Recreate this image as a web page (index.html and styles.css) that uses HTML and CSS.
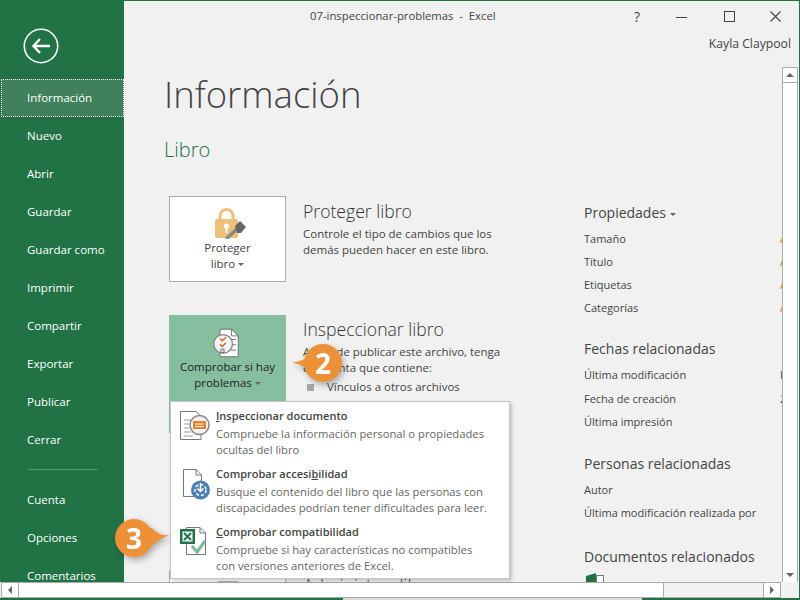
FILE: index.html
```html
<!DOCTYPE html>
<html lang="es">
<head>
  <meta charset="UTF-8">
  <title>07-inspeccionar-problemas - Excel</title>
  <link rel="stylesheet" href="styles.css">
</head>
<body>
  <div class="window">
    <div class="app">
      <nav class="sidebar">
        <div class="back">
          <svg width="36" height="36" viewBox="0 0 36 36" fill="none" stroke="#fff">
            <circle cx="18" cy="18" r="16.7" stroke-width="1.6"/>
            <path d="M10 18H27M17 11L10.500 18L17 25" stroke-width="2.400"/>
          </svg>
        </div>
        <a class="nav-item active">Información</a>
        <a class="nav-item">Nuevo</a>
        <a class="nav-item">Abrir</a>
        <a class="nav-item">Guardar</a>
        <a class="nav-item">Guardar como</a>
        <a class="nav-item">Imprimir</a>
        <a class="nav-item">Compartir</a>
        <a class="nav-item">Exportar</a>
        <a class="nav-item">Publicar</a>
        <a class="nav-item">Cerrar</a>
        <div class="nav-sep"></div>
        <a class="nav-item">Cuenta</a>
        <a class="nav-item">Opciones</a>
        <a class="nav-item">Comentarios</a>
      </nav>

      <div class="main">
        <div class="titlebar">
          <span class="doc-name">07-inspeccionar-problemas &nbsp;-&nbsp; Excel</span>
          <div class="win-buttons">
            <span class="win-help">?</span>
            <svg width="16" height="16" viewBox="0 0 16 16" stroke="#444" fill="none"><path d="M0 8.5H11"/></svg>
            <svg width="16" height="16" viewBox="0 0 16 16" stroke="#444" fill="none"><rect x="2.5" y="2.5" width="10" height="10"/></svg>
            <svg width="16" height="16" viewBox="0 0 16 16" stroke="#444" fill="none" stroke-width="1.1"><path d="M2.5 2.5L12.5 12.5M12.5 2.5L2.5 12.5"/></svg>
          </div>
        </div>
        <div class="user">Kayla Claypool</div>

        <div class="scroll-wrap">
          <div class="doc">
            <h1>Información</h1>
            <h2>Libro</h2>
            <div class="columns">
              <div class="left-col">
                <section class="block">
                  <div class="card">
                    <svg class="card-icon" width="36" height="32" viewBox="0 0 36 32">
                      <path d="M10 13V9a6.500 6.500 0 0 1 13 0v4" fill="none" stroke="#edc07c" stroke-width="3"/>
                      <rect x="5" y="12" width="23" height="19" rx="2" fill="#edc07c"/>
                      <circle cx="16.500" cy="19" r="2.500" fill="#fff"/>
                      <rect x="15.500" y="20" width="2" height="6" fill="#fff"/>
                      <path d="M16 32l12-11" stroke="#8a8a8a" stroke-width="3.500"/>
                      <path d="M25 19l5-5 6 6-5 6h-4z" fill="#666"/>
                    </svg>
                    <span>Proteger<br>libro <i class="caret"></i></span>
                  </div>
                  <div class="block-text">
                    <h3>Proteger libro</h3>
                    <p>Controle el tipo de cambios que los<br>demás pueden hacer en este libro.</p>
                  </div>
                </section>

                <section class="block block-tall">
                  <div class="card card-active">
                    <svg class="card-icon" width="32" height="30" viewBox="0 2 36 32" fill="none">
                      <path d="M9 2.500H22L29.500 10V33.500H9z" fill="#fff" stroke="#666"/>
                      <path d="M22 2.500V10H29.500" stroke="#666"/>
                      <path d="M21 14H27M21 20H27M21 26H27" stroke="#666"/>
                      <circle cx="12.500" cy="19" r="10.500" fill="#f4f4f4" stroke="#888" stroke-width="1.500"/>
                      <path d="M9 13l2.500 2.500 4-4M9 19.500l2.500 2.500 4-4" stroke="#d2622a" stroke-width="1.500"/>
                      <rect x="10" y="25" width="3.500" height="3.500" stroke="#666"/>
                    </svg>
                    <span>Comprobar si hay<br>problemas <i class="caret"></i></span>
                  </div>
                  <div class="block-text">
                    <h3>Inspeccionar libro</h3>
                    <p>Antes de publicar este archivo, tenga<br>en cuenta que contiene:</p>
                    <ul>
                      <li>Vínculos a otros archivos</li>
                    </ul>
                  </div>
                </section>

                <section class="block">
                  <div class="card">
                    <svg class="card-icon" width="36" height="32" viewBox="0 0 36 32" fill="none"><rect x="8" y="1" width="20" height="30" fill="#fff" stroke="#666"/></svg>
                  </div>
                  <div class="block-text">
                    <h3>Administrar libro</h3>
                  </div>
                </section>
              </div>

              <aside class="props">
                <div class="props-group props-first">
                  <h4>Propiedades <i class="caret"></i></h4>
                  <div class="prop"><span>Tamaño</span><b class="add">Aún no guardado</b></div>
                  <div class="prop"><span>Título</span><b class="add">Agregar un título</b></div>
                  <div class="prop"><span>Etiquetas</span><b class="add">Agregar una etiqueta</b></div>
                  <div class="prop"><span>Categorías</span><b class="add">Agregar una categoría</b></div>
                </div>

                <div class="props-group">
                  <h4>Fechas relacionadas</h4>
                  <div class="prop"><span>Última modificación</span><b>Hoy, 11:11</b></div>
                  <div class="prop"><span>Fecha de creación</span><b>22/07/2015</b></div>
                  <div class="prop"><span>Última impresión</span></div>
                </div>

                <div class="props-group">
                  <h4>Personas relacionadas</h4>
                  <div class="prop"><span>Autor</span></div>
                  <div class="prop"><span>Última modificación realizada por</span></div>
                </div>

                <div class="props-group props-last">
                  <h4>Documentos relacionados</h4>
                  <svg class="related-icon" width="50" height="12" viewBox="0 0 50 12"><path d="M2 4l10-3v11H2z" fill="#217346"/><rect x="12.500" y="3.500" width="7" height="9" fill="#fff" stroke="#777"/></svg>
                </div>
              </aside>
            </div>
          </div>

          <div class="vscroll">
            <div class="sb-btn"><i class="arrow-up"></i></div>
            <div class="sb-track"></div>
            <div class="sb-btn"><i class="arrow-down"></i></div>
          </div>
        </div>
      </div>
    </div>

    <div class="hscroll">
      <div class="sb-btn"><i class="arrow-left"></i></div>
      <div class="hs-track"></div>
      <div class="hs-gray"></div>
      <div class="sb-btn"><i class="arrow-right"></i></div>
    </div>
    <div class="bottom-edge"></div>

    <div class="menu">
      <div class="menu-item">
        <svg width="32" height="32" viewBox="0 0 32 32" fill="none">
          <path d="M1.500 1.500H17L22 6V29.500H1.500z" fill="#fff" stroke="#777"/>
          <path d="M5 10H12M5 14H10M5 18H10M5 22H12M5 26H14" stroke="#999"/>
          <circle cx="20.500" cy="15" r="9.500" fill="#f2f2f2" stroke="#888" stroke-width="1.500"/>
          <rect x="14" y="11" width="13" height="8" fill="#e5822f"/>
          <path d="M16 14H24.500M16 16.500H24.500" stroke="#fff"/>
        </svg>
        <div>
          <strong><u>I</u>nspeccionar documento</strong>
          <p>Compruebe la información personal o propiedades<br>ocultas del libro</p>
        </div>
      </div>
      <div class="menu-item">
        <svg width="32" height="32" viewBox="0 0 32 32" fill="none">
          <path d="M4.500 1.500H17L22.500 7V28.500H4.500z" fill="#fff" stroke="#777"/>
          <path d="M17 1.500V7H22.500" stroke="#777"/>
          <circle cx="21.500" cy="22" r="9.500" fill="#4b7fb5"/>
          <circle cx="21.500" cy="22" r="5.500" fill="none" stroke="#fff" stroke-dasharray="3 2" stroke-width="1.500"/>
          <path d="M21.500 15V23M18.500 20.500L21.500 23.500L24.500 20.500" stroke="#fff" stroke-width="1.500"/>
        </svg>
        <div>
          <strong>Comprobar acces<span>i</span><u>b</u>ilidad</strong>
          <p>Busque el contenido del libro que las personas con<br>discapacidades podrían tener dificultades para leer.</p>
        </div>
      </div>
      <div class="menu-item">
        <svg width="32" height="32" viewBox="0 0 32 32" fill="none">
          <path d="M7.500 1.500H21L26.500 7V28.500H7.500z" fill="#fff" stroke="#777"/>
          <path d="M21 1.500V7H26.500" stroke="#777"/>
          <rect x="1" y="3" width="15" height="15" fill="#217346"/>
          <rect x="3.500" y="5.500" width="10" height="10" fill="#fff"/>
          <path d="M5 7L12 14M12 7L5 14" stroke="#217346" stroke-width="2"/>
          <path d="M13 20L18 26L26 15" stroke="#7fb89a" stroke-width="3"/>
        </svg>
        <div>
          <strong><u>C</u>omprobar compatibilidad</strong>
          <p>Compruebe si hay características no compatibles<br>con versiones anteriores de Excel.</p>
        </div>
      </div>
    </div>

    <div class="callout callout-two">
      <svg width="58" height="44" viewBox="0 0 58 44"><path d="M1 21.500Q12 21 20 13L36 14L24 33Q14 24 1 21.500z" fill="#ed9139"/><circle cx="32" cy="22" r="19" fill="#ed9139"/></svg>
      <span>2</span>
    </div>
    <div class="callout callout-three">
      <svg width="58" height="44" viewBox="0 0 58 44"><path d="M56 19Q46 21 38 12L22 14L34 33Q44 23 56 19z" fill="#ed9139"/><circle cx="20" cy="22" r="19" fill="#ed9139"/></svg>
      <span>3</span>
    </div>
  </div>
</body>
</html>
```

FILE: styles.css
```css
/* Excel backstage */
body {
  margin: 0;
  font-family: "Open Sans", "Noto Sans", sans-serif;
  color: #444;
  overflow: hidden;
}

.window {
  position: relative;
  width: 800px;
  height: 600px;
  display: flex;
  flex-direction: column;
  box-sizing: border-box;
  border-top: 1px solid #217346;
  border-right: 1px solid #217346;
  background: #f1f1f1;
  overflow: hidden;
}

.app {
  flex: 1;
  display: flex;
  min-height: 0;
}

/* sidebar */
.sidebar {
  width: 124px;
  flex: none;
  background: #217346;
  overflow: hidden;
}

.back {
  height: 78px;
  box-sizing: border-box;
  padding: 27px 0 0 23px;
}

.nav-item {
  display: block;
  height: 38px;
  line-height: 38px;
  padding-left: 27px;
  font-size: 11.5px;
  color: #fff;
  box-sizing: border-box;
}

.nav-item.active {
  background: #40805d;
  outline: 1px dotted #fff;
  outline-offset: -1px;
  margin-left: 1px;
  padding-left: 26px;
}

.nav-sep {
  height: 1px;
  margin: 10px 26px 11px 27px;
  background: #4f9a73;
}

/* title bar */
.main {
  flex: 1;
  min-width: 0;
  display: flex;
  flex-direction: column;
}

.titlebar {
  height: 31px;
  flex: none;
  display: flex;
  align-items: center;
}

.doc-name {
  margin: -2px 0 0 186px;
  font-size: 11.3px;
}

.win-buttons {
  margin-left: auto;
  display: flex;
  align-items: center;
  gap: 30px;
  padding-right: 15px;
}

.win-help {
  width: 16px;
  font-size: 14px;
  text-align: center;
  margin-right: 1px;
}

.user {
  height: 24px;
  line-height: 24px;
  flex: none;
  text-align: right;
  padding-right: 8px;
  font-size: 12.2px;
}

.scroll-wrap {
  flex: 1;
  min-height: 0;
  display: flex;
}

.doc {
  flex: 1;
  min-width: 0;
  overflow: hidden;
  padding: 15px 0 0 40px;
}

h1 {
  margin: 0;
  font-size: 36.5px;
  font-weight: 300;
  line-height: 46px;
  color: #444;
}

h2 {
  margin: 19px 0 0;
  font-size: 20px;
  font-weight: 300;
  line-height: 28px;
  color: #217346;
}

.columns {
  display: flex;
  margin-top: 32px;
}

.left-col {
  width: 415px;
  margin-left: 5px;
  flex: none;
}

/* cards */
.block {
  display: flex;
  gap: 17px;
  margin-bottom: 33px;
}

.block-tall {
  height: 222px;
}

.block-tall .block-text {
  padding-top: 2px;
}

.card {
  width: 117px;
  height: 86px;
  flex: none;
  box-sizing: border-box;
  background: #fff;
  border: 1px solid #ababab;
  text-align: center;
  font-size: 11.5px;
  line-height: 16px;
  padding-top: 10px;
}

.card span {
  display: block;
  margin-top: 1px;
}

.card-icon {
  display: block;
  margin: 0 auto;
}

.card-active {
  background: #86bf9f;
  border-color: #86bf9f;
  color: #222;
  height: 118px;
  padding-top: 12px;
}

.caret {
  display: inline-block;
  border: 3px solid transparent;
  border-top-color: #666;
  border-bottom: 0;
  vertical-align: middle;
}

.block-text {
  padding-top: 3px;
}

h3 {
  margin: 0 0 3px;
  font-size: 17.6px;
  font-weight: 300;
  line-height: 24px;
  color: #333;
}

.block-text p {
  margin: 0;
  font-size: 11.5px;
  line-height: 16px;
}

.block-text ul {
  margin: 3px 0 0;
  padding: 0;
  list-style: none;
  font-size: 11.5px;
  line-height: 16px;
}

.block-text li::before {
  content: "";
  display: inline-block;
  width: 7px;
  height: 7px;
  margin: 0 13px 0 4px;
  background: #a6a6a6;
}

/* right column */
.props {
  padding-top: 6px;
  white-space: nowrap;
}

.props-group {
  margin-top: 19px;
}

.props-first {
  margin-top: 0;
}

.props-first .prop {
  height: 23px;
  line-height: 23px;
}

.props-last {
  margin-top: 21px;
}

h4 {
  margin: 0 0 3px;
  font-size: 14px;
  font-weight: 400;
  line-height: 22px;
  color: #444;
}

.prop {
  height: 23.5px;
  line-height: 23.5px;
  font-size: 11px;
  display: flex;
}

.prop span {
  width: 196px;
  flex: none;
}

.prop b {
  font-weight: 400;
}

.prop .add {
  color: #d2822f;
}

.related-icon {
  display: block;
  margin-top: 4px;
}

/* scrollbars */
.vscroll {
  width: 16px;
  margin: 11px 1px 0 0;
  flex: none;
  display: flex;
  flex-direction: column;
  background: #fff;
  border: 1px solid #ababab;
  border-bottom: 0;
  box-sizing: border-box;
}

.sb-btn {
  height: 14px;
  flex: none;
  background: #fff;
  display: flex;
  align-items: center;
  justify-content: center;
}

.sb-track {
  flex: 1;
  border-top: 1px solid #ababab;
}

.arrow-up,
.arrow-down,
.arrow-left,
.arrow-right {
  width: 0;
  height: 0;
  border: 4px solid transparent;
}

.arrow-up { border-bottom-color: #666; border-top: 0; }
.arrow-down { border-top-color: #666; border-bottom: 0; }
.arrow-left { border-right-color: #666; border-left: 0; }
.arrow-right { border-left-color: #666; border-right: 0; }

.hscroll {
  height: 16px;
  flex: none;
  display: flex;
  margin: 0 18px 0 1px;
  background: #fff;
  border: 1px solid #ababab;
  box-sizing: border-box;
}

.hscroll .sb-btn {
  width: 16px;
}

.hs-track {
  width: 644px;
  border-left: 1px solid #ababab;
  border-right: 1px solid #ababab;
}

.hs-gray {
  flex: 1;
  background: #f1f1f1;
  border-right: 1px solid #ababab;
}

.bottom-edge {
  height: 2px;
  flex: none;
  background: linear-gradient(90deg, #217346 343px, #d9d9d9 343px, #d9d9d9 642px, #217346 642px);
}

/* inspect menu */
.menu {
  position: absolute;
  left: 170px;
  top: 400px;
  width: 340px;
  height: 178px;
  box-sizing: border-box;
  padding: 6px 0 0 8px;
  background: #fff;
  border: 1px solid #c6c6c6;
  box-shadow: 2px 2px 4px rgba(0, 0, 0, 0.2);
}

.menu-item {
  display: flex;
  gap: 5px;
  height: 58px;
  font-size: 11.25px;
  line-height: 16px;
  color: #666;
}

.menu-item svg {
  flex: none;
  margin-top: 2px;
}

.menu-item strong {
  display: block;
  font-size: 11px;
  font-weight: 600;
  color: #444;
  margin-bottom: 2px;
}

.menu-item p {
  margin: 0;
}

/* numbered callouts */
.callout {
  position: absolute;
  width: 58px;
  height: 44px;
  filter: drop-shadow(2px 3px 3px rgba(0, 0, 0, 0.3));
}

.callout svg {
  display: block;
}

.callout span {
  position: absolute;
  top: 2px;
  width: 38px;
  text-align: center;
  font-size: 28px;
  line-height: 40px;
  font-weight: 700;
  color: #fff;
}

.callout-two {
  left: 291px;
  top: 340px;
}

.callout-two span {
  left: 13px;
}

.callout-three {
  left: 114px;
  top: 515px;
}

.callout-three span {
  left: 1px;
}
```
